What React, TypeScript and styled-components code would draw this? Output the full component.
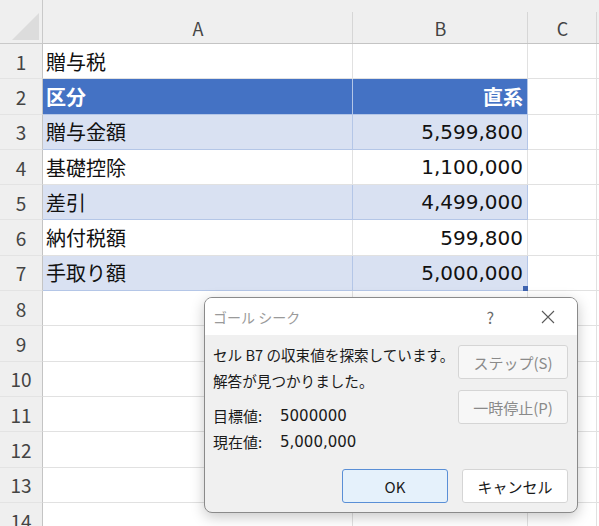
import React from 'react';
import styled, {createGlobalStyle} from 'styled-components';

const GlobalStyle = createGlobalStyle`
  html, body {
    margin: 0;
    padding: 0;
    background: #ffffff;
    overflow: hidden;
  }
  body {
    font-family: "Noto Sans CJK JP", "Noto Sans", sans-serif;
  }
`

const rows: {label: string; value: string; kind: 'plain' | 'head' | 'band'}[] = [
    {label: '贈与税', value: '', kind: 'plain'},
    {label: '区分', value: '直系', kind: 'head'},
    {label: '贈与金額', value: '5,599,800', kind: 'band'},
    {label: '基礎控除', value: '1,100,000', kind: 'plain'},
    {label: '差引', value: '4,499,000', kind: 'band'},
    {label: '納付税額', value: '599,800', kind: 'plain'},
    {label: '手取り額', value: '5,000,000', kind: 'band'},
];

const emptyRows = [8, 9, 10, 11, 12, 13, 14];

export default function App() {
    return (
        <>
            <GlobalStyle/>
            <Screen>
                <Sheet>
                    <Corner>
                        <svg width="43" height="44" viewBox="0 0 43 44">
                            <polygon points="12,40 39,40 39,13" fill="#dcdcdc"/>
                        </svg>
                    </Corner>
                    <ColHead>A</ColHead>
                    <ColHead>B</ColHead>
                    <ColHead>C</ColHead>
                    <ColHeadRest/>

                    {rows.map((r, i) => (
                        <React.Fragment key={i}>
                            <RowHead>{i + 1}</RowHead>
                            <Cell $kind={r.kind} $bold={r.kind === 'head'}>{r.label}</Cell>
                            <Cell $kind={r.kind} $bold={r.kind === 'head'} $right $number={r.kind !== 'head'}>
                                {r.value}
                                {i === 6 && <FillHandle/>}
                            </Cell>
                            <Cell $kind="plain"/>
                            <Cell $kind="plain" $last/>
                        </React.Fragment>
                    ))}

                    {emptyRows.map(n => (
                        <React.Fragment key={n}>
                            <RowHead>{n}</RowHead>
                            <Cell $kind="plain"/>
                            <Cell $kind="plain"/>
                            <Cell $kind="plain"/>
                            <Cell $kind="plain" $last/>
                        </React.Fragment>
                    ))}
                </Sheet>

                <Dialog>
                    <TitleBar>
                        <Title>ゴール シーク</Title>
                        <TitleIcons>
                            <Help>?</Help>
                            <svg width="16" height="16" viewBox="0 0 16 16">
                                <path d="M2 2 L14 14 M14 2 L2 14" stroke="#5a5a5a" strokeWidth="1.1" fill="none"/>
                            </svg>
                        </TitleIcons>
                    </TitleBar>
                    <DialogBody>
                        <TopPart>
                            <Messages>
                                <Line>セル B7 の収束値を探索しています。</Line>
                                <Line>解答が見つかりました。</Line>
                                <Values>
                                    <ValueRow><span>目標値:</span><Num>5000000</Num></ValueRow>
                                    <ValueRow><span>現在値:</span><Num>5,000,000</Num></ValueRow>
                                </Values>
                            </Messages>
                            <SideButtons>
                                <Button $disabled>ステップ(S)</Button>
                                <Button $disabled>一時停止(P)</Button>
                            </SideButtons>
                        </TopPart>
                        <BottomButtons>
                            <Button $primary>OK</Button>
                            <Button>キャンセル</Button>
                        </BottomButtons>
                    </DialogBody>
                </Dialog>
            </Screen>
        </>
    );
}

const Screen = styled.div`
  position: relative;
  width: 599px;
  height: 526px;
  overflow: hidden;
  background: #ffffff;
`

const Sheet = styled.div`
  display: grid;
  grid-template-columns: 43px 310px 175px 69px 2px;
  grid-template-rows: 44px repeat(14, 35.3px);
  font-family: "Noto Sans CJK JP", sans-serif;
`

const Corner = styled.div`
  background: #efefef;
  border-right: 1px solid #c9c9c9;
  border-bottom: 1px solid #c9c9c9;
  box-sizing: border-box;
  svg {
    display: block;
  }
`

const ColHead = styled.div`
  background: #efefef;
  border-bottom: 1px solid #c4c4c4;
  box-sizing: border-box;
  display: flex;
  align-items: center;
  justify-content: center;
  padding-top: 12px;
  font-size: 18px;
  color: #444444;
  position: relative;

  &::after {
    content: '';
    position: absolute;
    right: 0;
    top: 12px;
    bottom: 0;
    width: 1px;
    background: #d6d6d6;
  }
`

const ColHeadRest = styled.div`
  background: #efefef;
  border-bottom: 1px solid #c4c4c4;
  box-sizing: border-box;
`

const RowHead = styled.div`
  background: #efefef;
  border-right: 1px solid #c4c4c4;
  border-bottom: 1px solid #e3e3e3;
  box-sizing: border-box;
  display: flex;
  align-items: center;
  justify-content: center;
  font-size: 19px;
  color: #444444;
`

const kindBg = {
    plain: '#ffffff',
    head: '#4472c4',
    band: '#d9e1f2',
};

const Cell = styled.div<{
    $kind: 'plain' | 'head' | 'band';
    $right?: boolean;
    $bold?: boolean;
    $last?: boolean;
    $number?: boolean
}>`
  position: relative;
  box-sizing: border-box;
  background: ${p => kindBg[p.$kind]};
  color: ${p => (p.$kind === 'head' ? '#ffffff' : '#111111')};
  font-weight: ${p => (p.$bold ? 700 : 400)};
  font-family: ${p => (p.$number ? '"DejaVu Sans", "Noto Sans CJK JP", sans-serif' : '"Noto Sans CJK JP", sans-serif')};
  font-size: 20px;
  border-right: ${p => (p.$last ? 'none' : `1px solid ${p.$kind === 'plain' ? '#e1e1e1' : '#b4c6e7'}`)};
  border-bottom: 1px solid ${p => (p.$kind === 'plain' ? '#e1e1e1' : '#b4c6e7')};
  display: flex;
  align-items: center;
  justify-content: ${p => (p.$right ? 'flex-end' : 'flex-start')};
  padding: 0 4px 0 3px;
  white-space: nowrap;
`

const FillHandle = styled.span`
  position: absolute;
  right: -1px;
  bottom: -1px;
  width: 5px;
  height: 5px;
  background: #3f64b0;
`

const Dialog = styled.div`
  position: absolute;
  left: 204px;
  top: 297px;
  width: 374px;
  height: 216px;
  box-sizing: border-box;
  border: 1px solid #8a8a8a;
  border-radius: 8px;
  background: #f0f0f0;
  box-shadow: 0 4px 14px rgba(0, 0, 0, 0.22);
  overflow: hidden;
  display: flex;
  flex-direction: column;
  font-family: "Noto Sans CJK JP", sans-serif;
`

const TitleBar = styled.div`
  height: 37px;
  background: #ffffff;
  display: flex;
  align-items: center;
  justify-content: space-between;
  padding: 0 0 0 8px;
`

const Title = styled.span`
  font-size: 14px;
  color: #9a9a9a;
`

const TitleIcons = styled.div`
  display: flex;
  align-items: center;
  gap: 46px;
  padding-right: 21px;
`

const Help = styled.span`
  font-size: 16px;
  color: #6a6a6a;
`

const DialogBody = styled.div`
  flex: 1;
  display: flex;
  flex-direction: column;
  padding: 10px 9px 9px 8px;
`

const TopPart = styled.div`
  display: flex;
  justify-content: space-between;
`

const Messages = styled.div`
  display: flex;
  flex-direction: column;
  margin-top: -3px;
  min-width: 0;
`

const Line = styled.div`
  font-size: 14.6px;
  line-height: 26px;
  color: #1a1a1a;
  white-space: nowrap;
`

const Values = styled.div`
  margin-top: 9px;
`

const ValueRow = styled.div`
  display: grid;
  grid-template-columns: 67px auto;
  font-size: 15px;
  line-height: 26px;
  color: #1a1a1a;
  white-space: nowrap;
`

const Num = styled.span`
  font-family: "DejaVu Sans", sans-serif;
  font-size: 15px;
`

const SideButtons = styled.div`
  display: flex;
  flex-direction: column;
  gap: 11px;
  flex-shrink: 0;
`

const Button = styled.button<{ $primary?: boolean; $disabled?: boolean }>`
  width: ${p => (p.$disabled ? '110px' : '106px')};
  height: 34px;
  box-sizing: border-box;
  border-radius: 3px;
  font-family: "Noto Sans CJK JP", sans-serif;
  font-size: 15px;
  color: ${p => (p.$disabled ? '#8a8a8a' : '#1a1a1a')};
  background: ${p => (p.$primary ? '#e5f1fb' : p.$disabled ? '#f7f7f7' : '#ffffff')};
  border: 1px solid ${p => (p.$primary ? '#5a8fd6' : '#d5d5d5')};
  padding: 0;
`

const BottomButtons = styled.div`
  margin-top: auto;
  display: flex;
  justify-content: flex-end;
  gap: 14px;
`
